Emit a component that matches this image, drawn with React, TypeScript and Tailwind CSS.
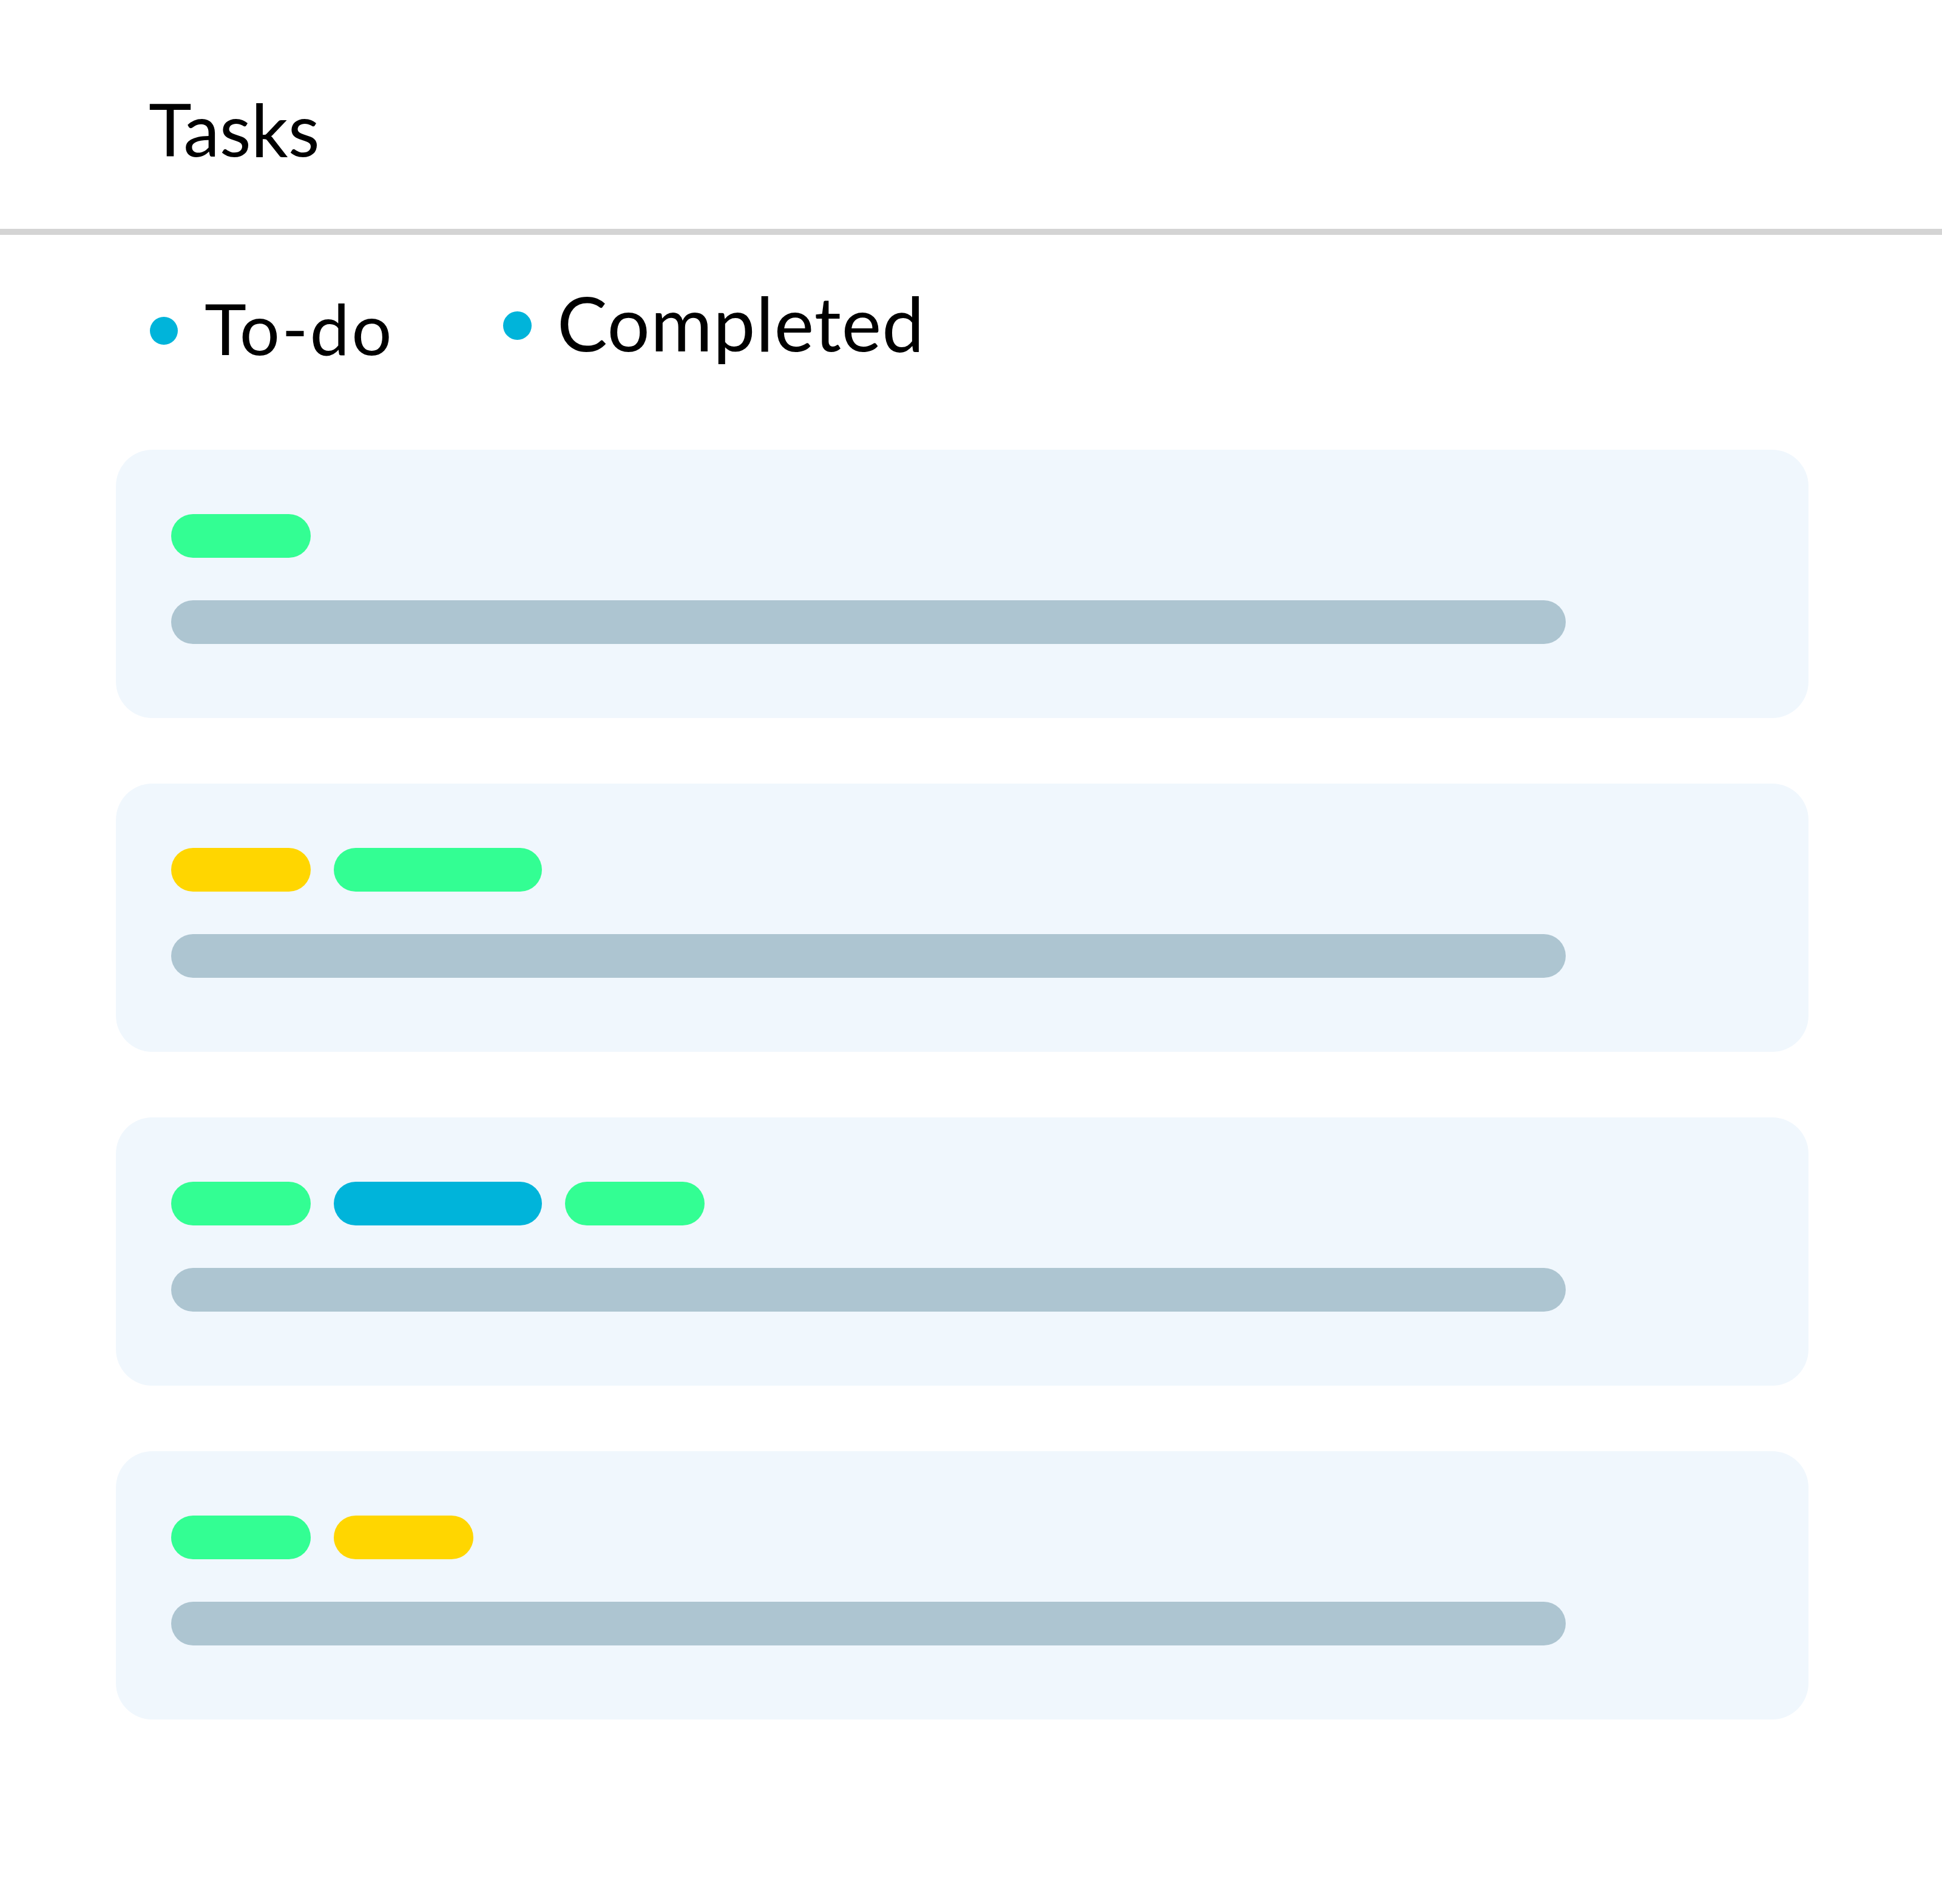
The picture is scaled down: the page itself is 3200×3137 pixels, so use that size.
import React from "react";

const GREEN = "bg-[#33fe93]";
const BLUE = "bg-[#00b4da]";
const YELLOW = "bg-[#ffd600]";

type Pill = { color: string; w: string };

const cards: Pill[][] = [
  [{ color: GREEN, w: "w-[230px]" }],
  [
    { color: YELLOW, w: "w-[230px]" },
    { color: GREEN, w: "w-[343px]" },
  ],
  [
    { color: GREEN, w: "w-[230px]" },
    { color: BLUE, w: "w-[343px]" },
    { color: GREEN, w: "w-[230px]" },
  ],
  [
    { color: GREEN, w: "w-[230px]" },
    { color: YELLOW, w: "w-[230px]" },
  ],
];

export default function App() {
  return (
    <div
      className="min-h-[3137px] w-[3200px] bg-white text-black"
      style={{ fontFamily: "Lato, 'Open Sans', sans-serif" }}
    >
      {/* Header */}
      <div className="pl-[245px] pt-[152px] pb-[105px]">
        <div className="text-[120px] leading-none font-normal">Tasks</div>
      </div>
      <div className="h-[10px] w-full bg-[#d4d4d4]" />

      {/* Legend */}
      <div className="flex h-[354px] items-start pl-[247px] pt-[82px]">
        <div className="flex w-[582px] items-start pt-[13px]">
          <div className="mt-[40px] h-[46px] w-[46px] rounded-full bg-[#00b4da]" />
          <div className="ml-[44px] text-[117px] leading-none tracking-[3px]">To-do</div>
        </div>
        <div className="flex items-start">
          <div className="mt-[44px] h-[47px] w-[47px] rounded-full bg-[#00b4da]" />
          <div className="ml-[42px] text-[124px] leading-none tracking-[1px]">Completed</div>
        </div>
      </div>

      {/* Cards */}
      <div className="flex flex-col gap-[108px] pl-[191px]">
        {cards.map((pills, i) => (
          <div
            key={i}
            className="h-[442px] w-[2789px] rounded-[60px] bg-[#f0f7fd] pl-[91px] pt-[106px]"
          >
            <div className="flex gap-[38px]">
              {pills.map((p, j) => (
                <div key={j} className={`h-[72px] rounded-full ${p.color} ${p.w}`} />
              ))}
            </div>
            <div className="mt-[70px] h-[72px] w-[2298px] rounded-full bg-[#adc5d1]" />
          </div>
        ))}
      </div>
    </div>
  );
}
